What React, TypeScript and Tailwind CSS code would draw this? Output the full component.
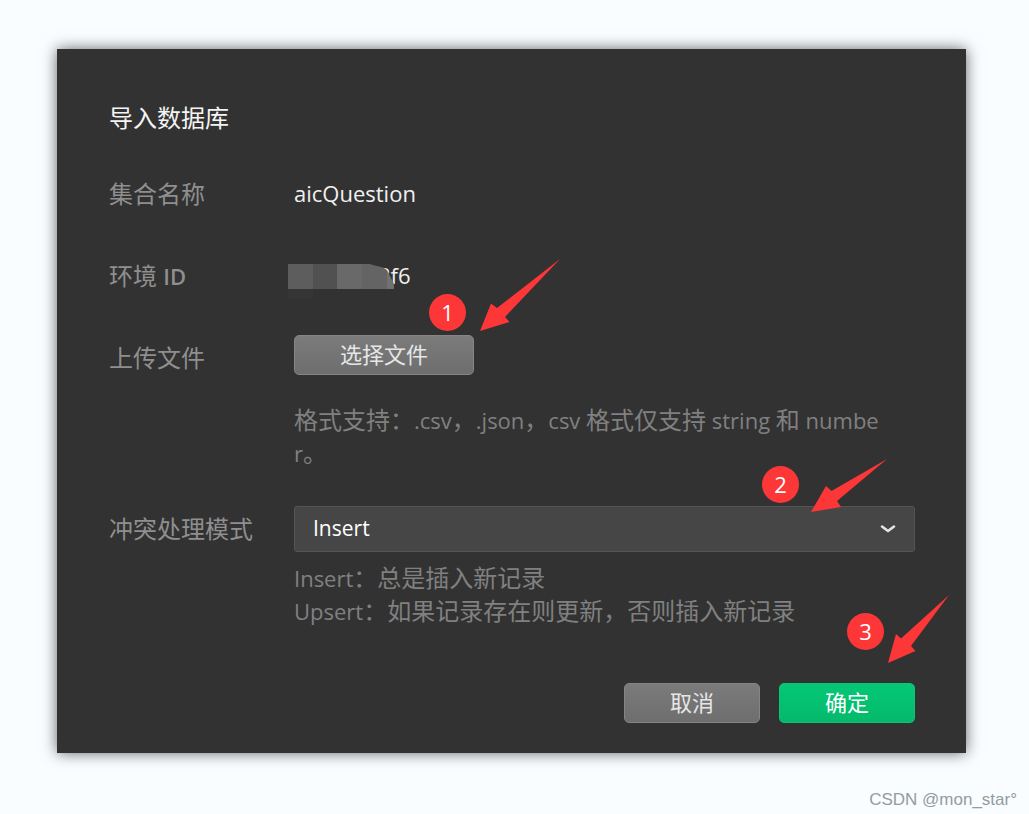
import type { ReactNode } from "react";

function Latin({ children }: { children: ReactNode }) {
  return <span className="text-[22px] leading-none">{children}</span>;
}

function Badge({ n, place }: { n: number; place: string }) {
  return (
    <span
      className={`absolute flex size-[37px] items-center justify-center rounded-full bg-[#fd3638] pb-0.5 text-[22px] leading-none text-white ${place}`}
    >
      {n}
    </span>
  );
}

function Arrow({ points, width, height, place }: { points: string; width: number; height: number; place: string }) {
  return (
    <svg
      aria-hidden="true"
      width={width}
      height={height}
      viewBox={`0 0 ${width} ${height}`}
      className={`pointer-events-none absolute ${place}`}
    >
      <polygon points={points} fill="#fd3638" />
    </svg>
  );
}

const label = "w-[185px] shrink-0 text-2xl leading-9 text-[#8f8f8f]";
const greyButton =
  "h-10 rounded-[5px] border border-[#858585] bg-linear-to-b from-[#7b7b7b] to-[#6e6e6e] pb-0.5 text-[22px] leading-none text-[#e6e6e6]";

export default function App() {
  return (
    <div className="flex min-h-screen flex-col bg-[#f9fdff] pt-[49px] pr-[63px] pl-[57px] font-['Open_Sans','Noto_Sans_CJK_SC',sans-serif]">
      <form
        onSubmit={(e) => e.preventDefault()}
        className="bg-[#323232] pt-[51px] pr-[51px] pb-[30px] pl-[52px] shadow-[0_0_14px_rgba(0,0,0,0.6)]"
      >
        <h1 className="text-2xl leading-9 text-[#f4f4f4]">导入数据库</h1>

        <div className="mt-10 flex">
          <span className={label}>集合名称</span>
          <span className="text-[22px] leading-[34px] font-medium text-[#f0f0f0]">aicQuestion</span>
        </div>

        <div className="mt-[46px] flex">
          <span className={label}>
            环境 <span className="text-[22px] leading-none font-semibold">ID</span>
          </span>
          <div className="relative pl-[84px] text-[22px] leading-[34px] font-medium text-[#f0f0f0]">
            8f6
            <svg
              aria-hidden="true"
              width="106"
              height="36"
              viewBox="0 0 106 36"
              className="absolute top-1.5 -left-1.5"
            >
              <defs>
                <clipPath id="mask">
                  <path d="M0 0H82C90 3 97 2 100 8L106 20V25H0Z" />
                </clipPath>
              </defs>
              <g clipPath="url(#mask)">
                <rect width="25" height="25" fill="#5d5d5d" />
                <rect x="25" width="24" height="25" fill="#515151" />
                <rect x="49" width="25" height="25" fill="#696969" />
                <rect x="74" width="25" height="25" fill="#646464" />
                <rect x="99" width="7" height="25" fill="#707070" />
              </g>
              <rect y="25" width="25" height="9" fill="#353535" />
            </svg>
          </div>
        </div>

        <div className="mt-[41px] flex">
          <span className={`${label} pt-[5px]`}>上传文件</span>
          <div className="relative min-w-0 flex-1">
            <button type="button" className={`${greyButton} block w-[180px]`}>
              选择文件
            </button>
            <p className="mt-7 pr-6 text-2xl leading-[33px] break-all text-[#808080]">
              格式支持：<Latin>.csv</Latin>，<Latin>.json</Latin>，<Latin>csv </Latin>格式仅支持<Latin> string </Latin>和
              <Latin> numbe<wbr />r</Latin>。
            </p>
            <Badge n={1} place="-top-[41px] left-[135px]" />
            <Arrow
              width={82}
              height={74}
              points="1,73 12,45.5 18,50 81,1 26,59 30.5,64"
              place="-top-[77px] left-[185px]"
            />
          </div>
        </div>

        <div className="mt-[37px] flex">
          <label htmlFor="mode" className={`${label} pt-[5px]`}>
            冲突处理模式
          </label>
          <div className="relative min-w-0 flex-1">
            <select
              id="mode"
              className="block h-[46px] w-full appearance-none rounded-[3px] border border-[#545454] bg-[#464646] px-[18px] text-[21px] text-white"
            >
              <option>Insert</option>
              <option>Upsert</option>
            </select>
            <svg
              aria-hidden="true"
              width="16"
              height="10"
              viewBox="0 0 16 10"
              className="pointer-events-none absolute top-[18px] right-[19px]"
            >
              <path d="M2 2.5 L8 7 L14 2.500" fill="none" stroke="#e4e4e4" strokeWidth="2.600" strokeLinecap="round" strokeLinejoin="round" />
            </svg>
            <p className="mt-[9px] text-2xl leading-[33px] text-[#808080]">
              <Latin>Insert</Latin>：总是插入新记录
              <br />
              <Latin>Upsert</Latin>：如果记录存在则更新，否则插入新记录
            </p>
            <Badge n={2} place="-top-10 right-[116px]" />
            <Arrow
              width={78}
              height={55}
              points="1,54 16,28 21.500,33 77,1 27,43 31,49"
              place="-top-12 right-[27px]"
            />
          </div>
        </div>

        <div className="relative mt-14 flex justify-end gap-[19px]">
          <button type="button" className={`${greyButton} w-[136px]`}>
            取消
          </button>
          <button
            type="submit"
            className="h-10 w-[136px] rounded-[5px] border border-[#0cc672] bg-linear-to-b from-[#04c877] to-[#05b96b] pb-0.5 text-[22px] leading-none text-white"
          >
            确定
          </button>
          <Badge n={3} place="-top-[70px] right-[31px]" />
          <Arrow
            width={63}
            height={70}
            points="1,69 9,40 14,44.500 62,1 24,52 28.500,57"
            place="-top-[89px] -right-[35px]"
          />
        </div>
      </form>

      <footer className="-mr-[51px] mt-auto pb-0.5 text-right font-['Liberation_Sans',sans-serif] text-[17px] leading-6 text-[#959b9e]">
        CSDN @mon_star°
      </footer>
    </div>
  );
}
